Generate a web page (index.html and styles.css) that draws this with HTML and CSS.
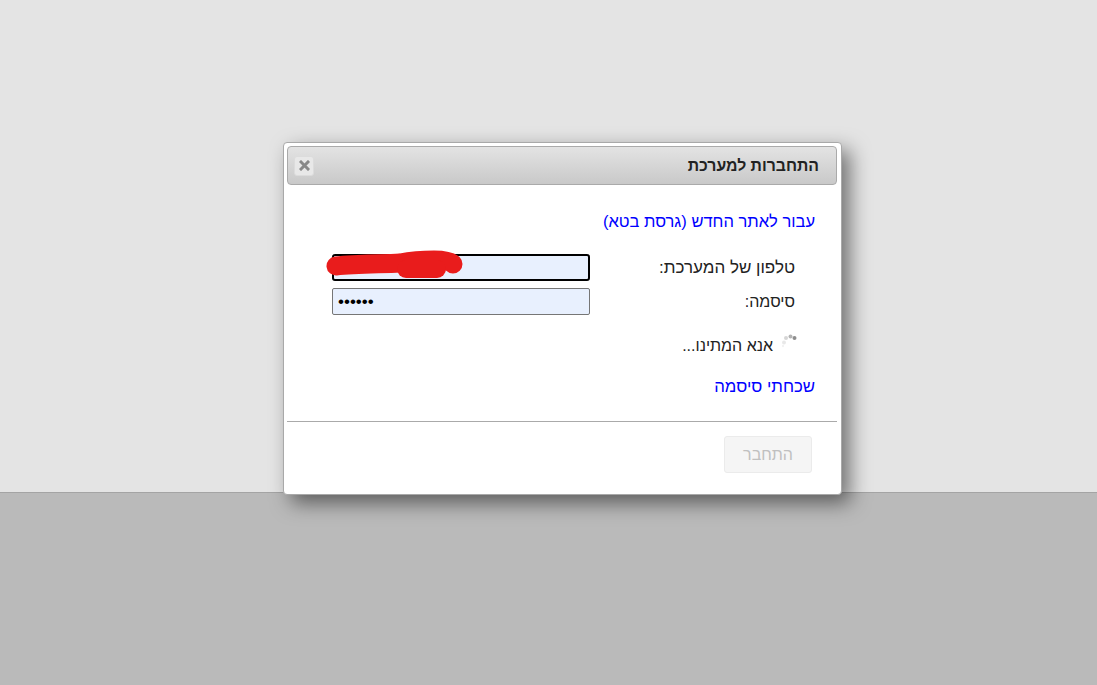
FILE: index.html
```html
<!DOCTYPE html>
<html lang="he" dir="rtl">
<head>
<meta charset="UTF-8">
<meta name="viewport" content="width=device-width, initial-scale=1.0">
<title>התחברות למערכת</title>
<link rel="stylesheet" href="styles.css">
</head>
<body>
  <div class="page-top"></div>
  <div class="page-bottom"></div>

  <div class="dialog">
    <div class="dialog-title">
      <span class="title-text">התחברות למערכת</span>
      <button class="close-btn" type="button" aria-label="סגור">
        <svg width="11" height="11" viewBox="0 0 11 11">
          <path d="M2 2 L9 9 M9 2 L2 9" stroke="#888" stroke-width="3" stroke-linecap="square" fill="none"/>
        </svg>
      </button>
    </div>

    <div class="dialog-body">
      <a class="link new-site" href="#">עבור לאתר החדש (גרסת בטא)</a>

      <form class="login-form">
        <label class="field-label phone-label" for="phone">טלפון של המערכת:</label>
        <input class="field-input focused" type="text" id="phone" value="0500000">
        <label class="field-label" for="password">סיסמה:</label>
        <input class="field-input secret" type="password" id="password" value="123456">
      </form>

      <div class="waiting">
        <svg class="spinner" width="16" height="14" viewBox="0 0 16 14">
          <circle cx="13.5" cy="4" r="2" fill="#8e8e8e"/>
          <circle cx="9.5" cy="2.5" r="2" fill="#b4b4b4"/>
          <circle cx="5" cy="4" r="2" fill="#d6d6d6"/>
          <circle cx="3" cy="8.5" r="2" fill="#e8e8e8"/>
          <circle cx="2" cy="12" r="1.2" fill="#f2f2f2"/>
        </svg>
        <span>אנא המתינו...</span>
      </div>

      <a class="link forgot" href="#">שכחתי סיסמה</a>
    </div>

    <div class="dialog-footer">
      <button class="login-btn" type="button" disabled>התחבר</button>
    </div>

    <!-- the red scribble hiding the phone number -->
    <svg class="scribble" width="140" height="32" viewBox="0 0 140 32">
      <path d="M10 17 C30 15 55 15 74 14 C90 11 100 11 108 11 C118 11 124 12 127 15" stroke="#e91c1c" stroke-width="19" stroke-linecap="round" stroke-linejoin="round" fill="none"/>
      <path d="M80 20 L111 20" stroke="#e91c1c" stroke-width="18" stroke-linecap="round" fill="none"/>
    </svg>
  </div>
</body>
</html>
```

FILE: styles.css
```css
* {
  box-sizing: border-box;
}
html, body {
  height: 100%;
}
body {
  margin: 0;
  display: flex;
  flex-direction: column;
  font-family: "Liberation Sans", Arial, sans-serif;
  font-size: 16px;
  color: #222;
  background: #bababa;
  overflow: hidden;
}
.page-top {
  height: 493px;
  background: #e4e4e4;
  border-bottom: 1px solid #a4a4a4;
}
.page-bottom {
  flex: 1;
  background: #bababa;
}
.dialog {
  position: absolute;
  left: 283px;
  top: 142px;
  width: 559px;
  height: 353px;
  padding: 3px 4px 3px 3px;
  background: #fff;
  border: 1px solid #a9a9a9;
  border-radius: 4px;
  box-shadow: 8px 8px 20px rgba(0, 0, 0, 0.5);
}
.dialog-title {
  display: flex;
  justify-content: space-between;
  align-items: center;
  height: 39px;
  padding: 0 17px 0 6px;
  background: linear-gradient(#e3e3e3, #c9c9c9);
  border: 1px solid #aaa;
  border-radius: 4px;
}
.title-text {
  font-size: 15.8px;
  font-weight: bold;
  color: #222;
}
.close-btn {
  display: flex;
  align-items: center;
  justify-content: center;
  width: 20px;
  height: 20px;
  padding: 0;
  background: #e8e8e8;
  border: 1px solid #dcdcdc;
  border-radius: 3px;
}
.dialog-body {
  display: flex;
  flex-direction: column;
  align-items: flex-start;
  height: 236px;
  padding: 27px 22px 0 0;
}
.link {
  color: #00f;
  text-decoration: none;
  line-height: 18px;
}
.new-site {
  font-size: 16.5px;
}
.login-form {
  display: grid;
  grid-template-columns: 225px 258px;
  grid-auto-rows: 27px;
  row-gap: 7px;
  align-items: center;
  margin-top: 24px;
}
.field-label {
  padding-right: 20px;
}
.phone-label {
  font-size: 17px;
}
.field-input {
  width: 258px;
  height: 27px;
  padding: 1px 5px;
  background: #e8f0fe;
  border: 1px solid #767676;
  border-radius: 2px;
  color: #000;
  font-size: 13px;
  direction: ltr;
}
.secret {
  font-size: 17px;
}
.focused {
  border: 2px solid #000;
  border-radius: 3px;
  outline: none;
}
.waiting {
  display: flex;
  align-items: flex-end;
  gap: 8px;
  margin-top: 19px;
  padding-right: 18px;
  line-height: 18px;
}
.spinner {
  margin-bottom: 7px;
}
.forgot {
  margin-top: 23px;
  font-size: 16.8px;
}
.dialog-footer {
  padding: 14px 25px 0 0;
  border-top: 1px solid #aaa;
}
.login-btn {
  width: 88px;
  height: 37px;
  padding: 0;
  background: #f5f5f5;
  border: 1px solid #ebebeb;
  border-radius: 3px;
  color: #c0c0c0;
  font-family: "Liberation Sans", Arial, sans-serif;
  font-size: 16px;
}
.scribble {
  position: absolute;
  left: 42px;
  top: 106px;
}
```
